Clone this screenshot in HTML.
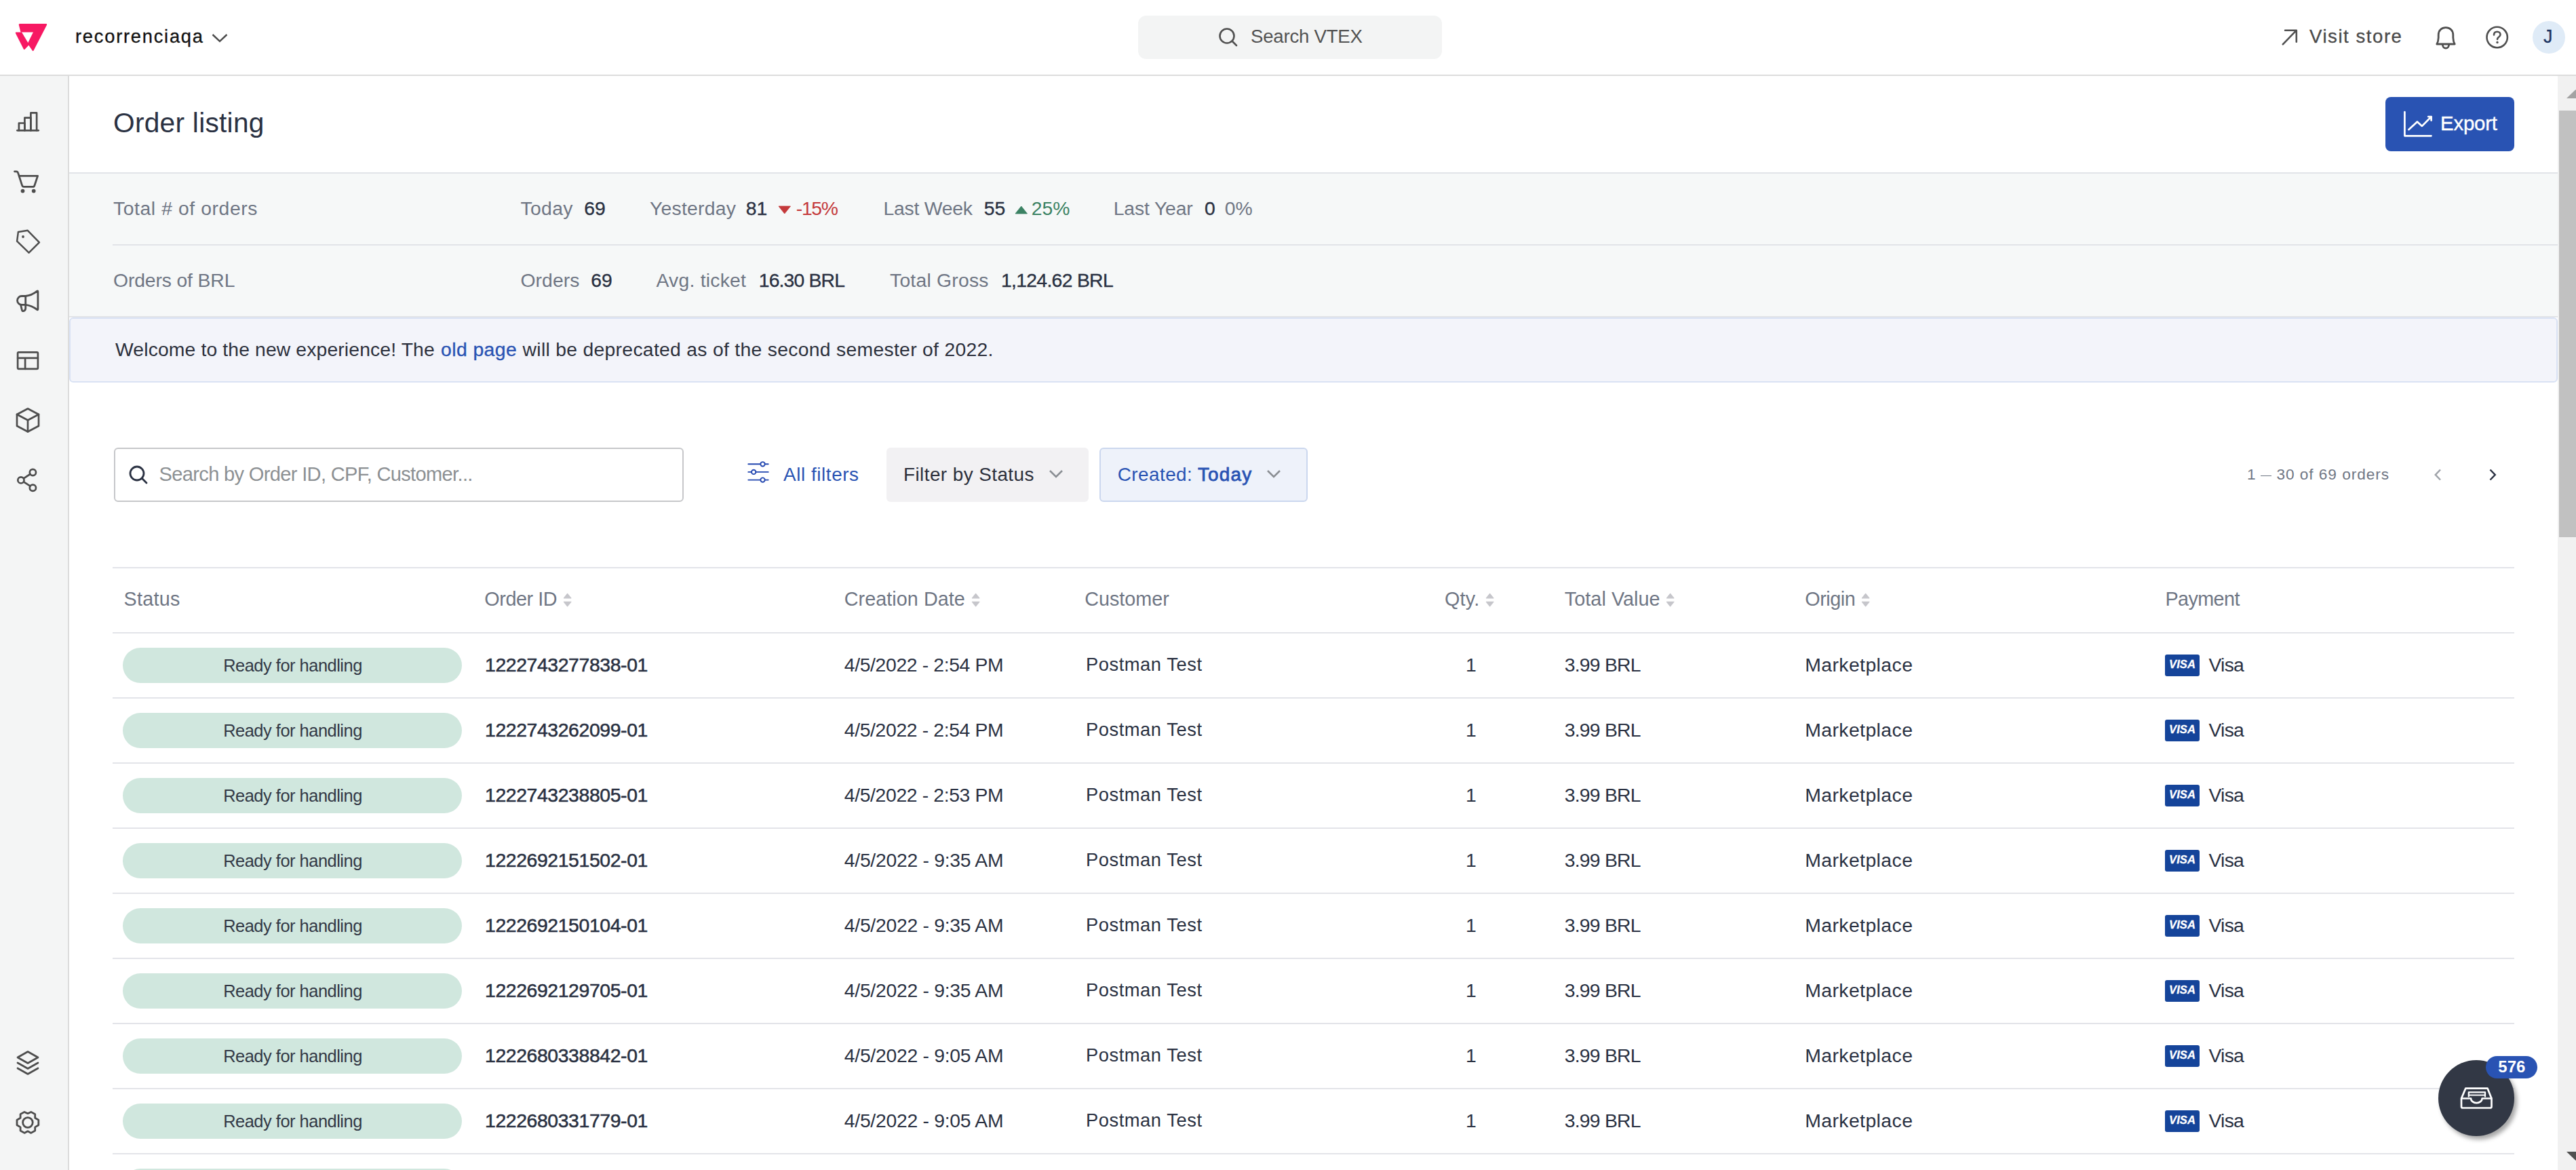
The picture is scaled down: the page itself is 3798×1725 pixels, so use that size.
<!DOCTYPE html><html><head><meta charset="utf-8"><style>
html,body{margin:0;padding:0;width:3798px;height:1725px;overflow:hidden;background:#fff}
.t{position:absolute;white-space:pre;font-family:"Liberation Sans",sans-serif;}
.b{position:absolute;}
</style></head><body>
<div class="b" style="left:0px;top:0px;width:3798px;height:110px;background:#fff"></div>
<div class="b" style="left:0px;top:110px;width:3798px;height:2px;background:#dcdcdc"></div>
<svg class="b" style="left:0;top:0" width="100" height="110" viewBox="0 0 100 110">
<path d="M28.8,36.2 H68.1 L48.6,74 L42.4,65 L35.8,72 L23.9,48.5 H31.4 L41.4,65.2 L50.8,46.3 H31.3 Z" fill="#f71963" stroke="#f71963" stroke-width="2.2" stroke-linejoin="round"/>
</svg>
<div class="t" style="left:111.00px;top:40.06px;font-size:27.33px;line-height:27.33px;color:#111;letter-spacing:1.742px;-webkit-text-stroke:0.3px #111;">recorrenciaqa</div>
<svg class="b" style="left:308px;top:46px" width="32" height="20" viewBox="0 0 32 20"><path d="M5.5,5 L16,14.8 L26.5,5" fill="none" stroke="#4a4a4a" stroke-width="2.4"/></svg>
<div class="b" style="left:1678px;top:23px;width:448px;height:64px;background:#f3f4f4;border-radius:12px"></div>
<svg class="b" style="left:1794px;top:39px" width="34" height="32" viewBox="0 0 34 32"><circle cx="15" cy="14" r="10.5" fill="none" stroke="#505050" stroke-width="2.6"/><path d="M22.5,21.5 L29,28" stroke="#505050" stroke-width="2.6" stroke-linecap="round"/></svg>
<div class="t" style="left:1844.00px;top:39.62px;font-size:27.62px;line-height:27.62px;color:#525252;letter-spacing:-0.230px;">Search VTEX</div>
<svg class="b" style="left:3360px;top:38px" width="34" height="34" viewBox="0 0 34 34"><path d="M5.8,27.3 L25.6,6.9 M9.1,6.7 H25.8 V23.7" fill="none" stroke="#505050" stroke-width="2.6" stroke-linecap="round" stroke-linejoin="round"/></svg>
<div class="t" style="left:3405.00px;top:39.62px;font-size:27.62px;line-height:27.62px;color:#4a4a4a;letter-spacing:1.526px;-webkit-text-stroke:0.3px #4a4a4a;">Visit store</div>
<svg class="b" style="left:3586px;top:36px" width="40" height="40" viewBox="0 0 40 40"><path d="M6.8,29 H33.2 Q31,25.5 30.8,19.5 V15.5 C30.8,8.8 26,4.7 20,4.7 C14,4.7 9.2,8.8 9.2,15.5 V19.5 Q9,25.5 6.8,29 Z" fill="none" stroke="#505050" stroke-width="2.8" stroke-linejoin="round"/><path d="M15.3,29.6 A4.7,5.6 0 0 0 24.7,29.6" fill="none" stroke="#505050" stroke-width="2.8"/></svg>
<svg class="b" style="left:3660px;top:35px" width="44" height="40" viewBox="0 0 44 40"><circle cx="21.7" cy="20" r="15.2" fill="none" stroke="#505050" stroke-width="2.6"/><path d="M17,16.5 C17,13.5 19,11.8 21.8,11.8 C24.6,11.8 26.5,13.6 26.5,16 C26.5,19.5 22,19.5 22,23" fill="none" stroke="#505050" stroke-width="2.6" stroke-linecap="round"/><circle cx="22" cy="27.5" r="1.7" fill="#505050"/></svg>
<div class="b" style="left:3734px;top:31px;width:48px;height:48px;background:#dfebf7;border-radius:50%"></div>
<div class="t" style="left:3750.00px;top:40.73px;font-size:26.89px;line-height:26.89px;color:#1d3563;-webkit-text-stroke:0.3px #1d3563;">J</div>
<div class="b" style="left:0px;top:112px;width:100px;height:1613px;background:#f4f5f5"></div>
<div class="b" style="left:100px;top:112px;width:2px;height:1613px;background:#dcdcdc"></div>
<svg class="b" style="left:20px;top:160px" width="44" height="40" viewBox="0 0 44 40" fill="none" stroke="#4d4d4d" stroke-width="2.7" stroke-linejoin="round" stroke-linecap="round"><path d="M5.4,32.3 H36.7"/><path d="M7.9,32.3 V21.5 H16.4 V32.3"/><path d="M16.4,32.3 V13.6 H25.4 V32.3"/><path d="M25.4,32.3 V6.4 H34.1 V32.3"/></svg>
<svg class="b" style="left:18px;top:246px" width="44" height="42" viewBox="0 0 44 42" fill="none" stroke="#4d4d4d" stroke-width="2.8" stroke-linejoin="round" stroke-linecap="round"><path d="M3.5,6.8 H6 Q8,6.8 8.6,8.9 L14.6,27.4 Q15.2,29.4 17.2,29.4 H30.4 Q32.3,29.4 32.9,27.5 L37.6,13.4 H10.2"/><circle cx="15.5" cy="35.6" r="1.5" fill="#4d4d4d"/><circle cx="31.7" cy="35.6" r="1.5" fill="#4d4d4d"/></svg>
<svg class="b" style="left:20px;top:334px" width="44" height="44" viewBox="0 0 44 44" fill="none" stroke="#4d4d4d" stroke-width="2.5" stroke-linejoin="round" stroke-linecap="round"><path d="M6.9,7.9 L20.8,5.8 L37.9,23.3 L22.6,38.7 L5.1,21.7 Z"/><circle cx="14" cy="15" r="1.9" fill="#4d4d4d" stroke="none"/></svg>
<svg class="b" style="left:20px;top:424px" width="44" height="40" viewBox="0 0 44 40" fill="none" stroke="#4d4d4d" stroke-width="2.8" stroke-linejoin="round" stroke-linecap="round"><path d="M35.9,6.2 Q35.9,4.3 34.4,5.3 Q27,11.3 17.7,12.5 H12 A6.45,6.45 0 0 0 12,25.4 H17.7 Q27,26.6 34.4,32.4 Q35.9,33.5 35.9,31.6 Z"/><path d="M17.7,12.5 V30.5 Q17.7,33.8 14.6,34.6 Q12.8,35 12.4,33.2 L10.6,25.6"/></svg>
<svg class="b" style="left:20px;top:513px" width="44" height="36" viewBox="0 0 44 36" fill="none" stroke="#4d4d4d" stroke-width="2.7" stroke-linejoin="round" stroke-linecap="round"><rect x="6.1" y="6.3" width="29.8" height="24.5" rx="1.5"/><path d="M6.1,14.9 H35.9 M17.1,14.9 V30.8"/></svg>
<svg class="b" style="left:20px;top:598px" width="44" height="44" viewBox="0 0 44 44" fill="none" stroke="#4d4d4d" stroke-width="2.7" stroke-linejoin="round" stroke-linecap="round"><path d="M21,4.5 L37,13 V30 L21,38.5 L5,30 V13 Z"/><path d="M5,13 L21,21.5 L37,13 M21,21.5 V38.5"/></svg>
<svg class="b" style="left:20px;top:686px" width="44" height="44" viewBox="0 0 44 44" fill="none" stroke="#4d4d4d" stroke-width="2.7" stroke-linejoin="round" stroke-linecap="round"><circle cx="10.9" cy="21.9" r="4.6"/><circle cx="28.4" cy="10.5" r="4.6"/><circle cx="28.4" cy="33.2" r="4.6"/><path d="M14.8,19.4 L24.5,13 M14.8,24.4 L24.5,30.7"/></svg>
<svg class="b" style="left:20px;top:1544px" width="44" height="46" viewBox="0 0 44 46" fill="none" stroke="#4d4d4d" stroke-width="2.7" stroke-linejoin="round" stroke-linecap="round"><path d="M21,6.5 L36,15 L21,23.5 L6,15 Z"/><path d="M6,23 L21,31.5 L36,23"/><path d="M6,31 L21,39.5 L36,31"/></svg>
<svg class="b" style="left:18px;top:1632px" width="46" height="46" viewBox="0 0 46 46" fill="none" stroke="#4d4d4d" stroke-width="2.8" stroke-linejoin="round" stroke-linecap="round"><circle cx="22.9" cy="23" r="7.3"/><path d="M22.9,9.7 L18,7.4 L12.1,10.7 L12.1,16.3 L7,19.2 L7,26.8 L12.1,29.9 L12.1,35 L18,38.4 L22.9,35.8 L27.8,38.4 L33.7,35 L33.7,29.9 L38.8,26.8 L38.8,19.2 L33.7,16.3 L33.7,10.7 L27.8,7.4 Z"/></svg>
<div class="b" style="left:102px;top:112px;width:3669px;height:142px;background:#fff"></div>
<div class="t" style="left:167.00px;top:161.04px;font-size:40.70px;line-height:40.70px;color:#2a3142;letter-spacing:0.258px;">Order listing</div>
<div class="b" style="left:3517px;top:143px;width:190px;height:80px;background:#2953b3;border-radius:8px"></div>
<svg class="b" style="left:3540px;top:160px" width="50" height="46" viewBox="0 0 50 46" fill="none" stroke="#fff" stroke-width="2.7" stroke-linecap="round" stroke-linejoin="round"><path d="M5.4,5 V40.3 H44.5"/><path d="M11.5,31 L23.9,19.4 L31,25.9 L44.4,12.3"/><path d="M40.2,12 H44.6 V17.6" /></svg>
<div class="t" style="left:3598.00px;top:166.84px;font-size:29.36px;line-height:29.36px;color:#fff;letter-spacing:-0.170px;-webkit-text-stroke:0.4px #fff;">Export</div>
<div class="b" style="left:102px;top:254px;width:3669px;height:2px;background:#e2e4e8"></div>
<div class="b" style="left:102px;top:256px;width:3669px;height:210px;background:#f6f8f8"></div>
<div class="b" style="left:166px;top:360px;width:3605px;height:2px;background:#e2e4e8"></div>
<div class="t" style="left:167.00px;top:293.00px;font-size:28.34px;line-height:28.34px;color:#6f7684;letter-spacing:0.580px;">Total # of orders</div>
<div class="t" style="left:767.50px;top:293.00px;font-size:28.34px;line-height:28.34px;color:#6f7684;letter-spacing:0.345px;">Today</div>
<div class="t" style="left:861.24px;top:293.00px;font-size:28.34px;line-height:28.34px;color:#2a3142;-webkit-text-stroke:0.35px #2a3142;">69</div>
<div class="t" style="left:958.00px;top:293.00px;font-size:28.34px;line-height:28.34px;color:#6f7684;letter-spacing:0.247px;">Yesterday</div>
<div class="t" style="left:1099.87px;top:293.00px;font-size:28.34px;line-height:28.34px;color:#2a3142;-webkit-text-stroke:0.35px #2a3142;">81</div>
<svg class="b" style="left:1146px;top:302px" width="22" height="15"><path d="M2,2 H19.5 L10.75,13 Z" fill="#c4393b" stroke="#c4393b" stroke-width="0.8" stroke-linejoin="round"/></svg>
<div class="t" style="left:1173.75px;top:293.00px;font-size:28.34px;line-height:28.34px;color:#c4393b;letter-spacing:-1.301px;">-15%</div>
<div class="t" style="left:1302.50px;top:293.00px;font-size:28.34px;line-height:28.34px;color:#6f7684;letter-spacing:-0.242px;">Last Week</div>
<div class="t" style="left:1450.74px;top:293.00px;font-size:28.34px;line-height:28.34px;color:#2a3142;-webkit-text-stroke:0.35px #2a3142;">55</div>
<svg class="b" style="left:1495px;top:302px" width="22" height="15"><path d="M2,13 H19.5 L10.75,2 Z" fill="#3b8263" stroke="#3b8263" stroke-width="0.8" stroke-linejoin="round"/></svg>
<div class="t" style="left:1520.77px;top:293.00px;font-size:28.34px;line-height:28.34px;color:#3b8263;">25%</div>
<div class="t" style="left:1641.75px;top:293.00px;font-size:28.34px;line-height:28.34px;color:#6f7684;letter-spacing:-0.149px;">Last Year</div>
<div class="t" style="left:1776.00px;top:293.00px;font-size:28.34px;line-height:28.34px;color:#2a3142;-webkit-text-stroke:0.35px #2a3142;">0</div>
<div class="t" style="left:1805.77px;top:293.00px;font-size:28.34px;line-height:28.34px;color:#6f7684;">0%</div>
<div class="t" style="left:167.00px;top:399.00px;font-size:28.34px;line-height:28.34px;color:#6f7684;letter-spacing:-0.137px;">Orders of BRL</div>
<div class="t" style="left:767.50px;top:399.00px;font-size:28.34px;line-height:28.34px;color:#6f7684;letter-spacing:0.077px;">Orders</div>
<div class="t" style="left:871.24px;top:399.00px;font-size:28.34px;line-height:28.34px;color:#2a3142;-webkit-text-stroke:0.35px #2a3142;">69</div>
<div class="t" style="left:967.50px;top:399.00px;font-size:28.34px;line-height:28.34px;color:#6f7684;letter-spacing:0.226px;">Avg. ticket</div>
<div class="t" style="left:1118.75px;top:399.00px;font-size:28.34px;line-height:28.34px;color:#2a3142;letter-spacing:-0.837px;-webkit-text-stroke:0.35px #2a3142;">16.30 BRL</div>
<div class="t" style="left:1312.00px;top:399.00px;font-size:28.34px;line-height:28.34px;color:#6f7684;letter-spacing:0.217px;">Total Gross</div>
<div class="t" style="left:1476.00px;top:399.00px;font-size:28.34px;line-height:28.34px;color:#2a3142;letter-spacing:-0.691px;-webkit-text-stroke:0.35px #2a3142;">1,124.62 BRL</div>
<div class="b" style="left:102px;top:466px;width:3669px;height:2px;background:#e2e4e8"></div>
<div class="b" style="left:102px;top:468px;width:3669px;height:96px;background:#f3f4fa;border:2px solid #d9e2f4;border-radius:6px;box-sizing:border-box"></div>
<div class="t" style="left:170.00px;top:501.00px;font-size:28.34px;line-height:28.34px;color:#2c303c;letter-spacing:0.125px;">Welcome to the new experience! The</div>
<div class="t" style="left:650.00px;top:501.00px;font-size:28.34px;line-height:28.34px;color:#2953b3;letter-spacing:0.435px;-webkit-text-stroke:0.35px #2953b3;">old page</div>
<div class="t" style="left:770.56px;top:501.00px;font-size:28.34px;line-height:28.34px;color:#2c303c;letter-spacing:0.292px;">will be deprecated as of the second semester of 2022.</div>
<div class="b" style="left:102px;top:564px;width:3669px;height:1161px;background:#fff"></div>
<div class="b" style="left:168px;top:660px;width:840px;height:80px;background:#fff;border:2px solid #c6c7ca;border-radius:6px;box-sizing:border-box"></div>
<svg class="b" style="left:187px;top:683px" width="34" height="34" viewBox="0 0 34 34" fill="none" stroke="#2a3142" stroke-width="2.8"><circle cx="15" cy="15" r="10"/><path d="M22.3,22.3 L29,29" stroke-linecap="round"/></svg>
<div class="t" style="left:234.60px;top:685.39px;font-size:29.07px;line-height:29.07px;color:#8c9093;letter-spacing:-0.668px;">Search by Order ID, CPF, Customer...</div>
<svg class="b" style="left:1098px;top:676px" width="40" height="40" viewBox="0 0 40 40" fill="none" stroke="#2347b0" stroke-width="1.9" stroke-linecap="round"><path d="M5.3,8.3 H23.2 M29.8,8.3 H34.7 M5.3,19.9 H9.9 M16.5,19.9 H34.7 M5.3,31.6 H23.2 M29.8,31.6 H34.7"/><circle cx="26.5" cy="8.3" r="3.2"/><circle cx="13.2" cy="19.9" r="3.2"/><circle cx="26.5" cy="31.6" r="3.2"/></svg>
<div class="t" style="left:1155.00px;top:685.57px;font-size:27.91px;line-height:27.91px;color:#2953b3;letter-spacing:0.557px;">All filters</div>
<div class="b" style="left:1307px;top:660px;width:298px;height:80px;background:#f2f1f3;border-radius:6px"></div>
<div class="t" style="left:1332.00px;top:685.57px;font-size:27.91px;line-height:27.91px;color:#2c303c;letter-spacing:0.419px;">Filter by Status</div>
<svg class="b" style="left:1544px;top:689px" width="26" height="20"><path d="M4,5 L13,14 L22,5" fill="none" stroke="#8a8e93" stroke-width="2.6"/></svg>
<div class="b" style="left:1621px;top:660px;width:307px;height:80px;background:#eef2fa;border:2px solid #cbd7ee;border-radius:6px;box-sizing:border-box"></div>
<div class="t" style="left:1647.80px;top:685.57px;font-size:27.91px;line-height:27.91px;color:#2953b3;letter-spacing:0.425px;">Created:</div>
<div class="t" style="left:1765.90px;top:685.57px;font-size:27.91px;line-height:27.91px;color:#2953b3;letter-spacing:1.211px;-webkit-text-stroke:0.8px #2953b3;">Today</div>
<svg class="b" style="left:1865px;top:689px" width="26" height="20"><path d="M4,5 L13,14 L22,5" fill="none" stroke="#8a8e93" stroke-width="2.6"/></svg>
<div class="t" style="left:3313.00px;top:688.40px;font-size:22.67px;line-height:22.67px;color:#6f7684;">1</div>
<div class="b" style="left:3332.5px;top:700.5px;width:16.5px;height:1.5px;background:#6f7684"></div>
<div class="t" style="left:3356.40px;top:688.40px;font-size:22.67px;line-height:22.67px;color:#6f7684;letter-spacing:0.955px;">30 of 69 orders</div>
<svg class="b" style="left:3584px;top:688px" width="22" height="24"><path d="M14,4.5 L6.8,12 L14,19.5" fill="none" stroke="#9ea2a8" stroke-width="2.5"/></svg>
<svg class="b" style="left:3664px;top:688px" width="22" height="24"><path d="M7.5,4.5 L14.7,12 L7.5,19.5" fill="none" stroke="#2a3142" stroke-width="2.5"/></svg>
<div class="b" style="left:166px;top:836px;width:3541px;height:2px;background:#e3e4e9"></div>
<div class="t" style="left:182.50px;top:868.83px;font-size:28.78px;line-height:28.78px;color:#6f7684;letter-spacing:0.242px;">Status</div>
<div class="t" style="left:714.30px;top:868.83px;font-size:28.78px;line-height:28.78px;color:#6f7684;letter-spacing:-0.434px;">Order ID</div>
<svg class="b" style="left:829.3px;top:874px" width="16" height="22"><path d="M2.4,7.8 L7.6,1.3 L12.9,7.8 Z M2.4,13.3 L7.6,19.9 L12.9,13.3 Z" fill="#c6c6cb" stroke="#c6c6cb" stroke-width="1.2" stroke-linejoin="round"/></svg>
<div class="t" style="left:1244.80px;top:868.83px;font-size:28.78px;line-height:28.78px;color:#6f7684;letter-spacing:0.044px;">Creation Date</div>
<svg class="b" style="left:1430.8px;top:874px" width="16" height="22"><path d="M2.4,7.8 L7.6,1.3 L12.9,7.8 Z M2.4,13.3 L7.6,19.9 L12.9,13.3 Z" fill="#c6c6cb" stroke="#c6c6cb" stroke-width="1.2" stroke-linejoin="round"/></svg>
<div class="t" style="left:1599.20px;top:868.83px;font-size:28.78px;line-height:28.78px;color:#6f7684;letter-spacing:-0.008px;">Customer</div>
<div class="t" style="left:2130.00px;top:868.83px;font-size:28.78px;line-height:28.78px;color:#6f7684;letter-spacing:0.193px;">Qty.</div>
<svg class="b" style="left:2188.7px;top:874px" width="16" height="22"><path d="M2.4,7.8 L7.6,1.3 L12.9,7.8 Z M2.4,13.3 L7.6,19.9 L12.9,13.3 Z" fill="#c6c6cb" stroke="#c6c6cb" stroke-width="1.2" stroke-linejoin="round"/></svg>
<div class="t" style="left:2306.80px;top:868.83px;font-size:28.78px;line-height:28.78px;color:#6f7684;letter-spacing:0.063px;">Total Value</div>
<svg class="b" style="left:2454.8px;top:874px" width="16" height="22"><path d="M2.4,7.8 L7.6,1.3 L12.9,7.8 Z M2.4,13.3 L7.6,19.9 L12.9,13.3 Z" fill="#c6c6cb" stroke="#c6c6cb" stroke-width="1.2" stroke-linejoin="round"/></svg>
<div class="t" style="left:2661.20px;top:868.83px;font-size:28.78px;line-height:28.78px;color:#6f7684;letter-spacing:-0.417px;">Origin</div>
<svg class="b" style="left:2743px;top:874px" width="16" height="22"><path d="M2.4,7.8 L7.6,1.3 L12.9,7.8 Z M2.4,13.3 L7.6,19.9 L12.9,13.3 Z" fill="#c6c6cb" stroke="#c6c6cb" stroke-width="1.2" stroke-linejoin="round"/></svg>
<div class="t" style="left:3192.40px;top:868.83px;font-size:28.78px;line-height:28.78px;color:#6f7684;letter-spacing:-0.577px;">Payment</div>
<div class="b" style="left:166px;top:932px;width:3541px;height:2px;background:#e3e4e9"></div>
<div class="b" style="left:181px;top:955px;width:500px;height:52px;background:#d0e7de;border-radius:26px"></div>
<div class="t" style="left:329.20px;top:968.76px;font-size:25.44px;line-height:25.44px;color:#323845;letter-spacing:-0.496px;">Ready for handling</div>
<div class="t" style="left:715.00px;top:965.50px;font-size:28.34px;line-height:28.34px;color:#2a3142;letter-spacing:-0.365px;-webkit-text-stroke:0.55px #2a3142;">1222743277838-01</div>
<div class="t" style="left:1244.80px;top:965.50px;font-size:28.34px;line-height:28.34px;color:#2a3142;letter-spacing:-0.362px;">4/5/2022 - 2:54 PM</div>
<div class="t" style="left:1600.90px;top:966.36px;font-size:27.33px;line-height:27.33px;color:#2a3142;letter-spacing:0.550px;">Postman Test</div>
<div class="t" style="left:2161.00px;top:965.50px;font-size:28.34px;line-height:28.34px;color:#2a3142;">1</div>
<div class="t" style="left:2306.80px;top:965.50px;font-size:28.34px;line-height:28.34px;color:#2a3142;letter-spacing:-0.780px;">3.99 BRL</div>
<div class="t" style="left:2661.20px;top:965.50px;font-size:28.34px;line-height:28.34px;color:#2a3142;letter-spacing:0.442px;">Marketplace</div>
<div class="b" style="left:3192px;top:965px;width:51px;height:32px;background:#15449a;border-radius:3px"></div>
<div class="t" style="left:3198.00px;top:972.47px;font-size:16.57px;line-height:16.57px;color:#fff;letter-spacing:0.109px;font-weight:700;-webkit-text-stroke:0.3px #fff;font-style:italic;">VISA</div>
<div class="t" style="left:3256.40px;top:965.50px;font-size:28.34px;line-height:28.34px;color:#2a3142;letter-spacing:-0.715px;">Visa</div>
<div class="b" style="left:166px;top:1028px;width:3541px;height:2px;background:#e3e4e9"></div>
<div class="b" style="left:181px;top:1051px;width:500px;height:52px;background:#d0e7de;border-radius:26px"></div>
<div class="t" style="left:329.20px;top:1064.76px;font-size:25.44px;line-height:25.44px;color:#323845;letter-spacing:-0.496px;">Ready for handling</div>
<div class="t" style="left:715.00px;top:1061.50px;font-size:28.34px;line-height:28.34px;color:#2a3142;letter-spacing:-0.365px;-webkit-text-stroke:0.55px #2a3142;">1222743262099-01</div>
<div class="t" style="left:1244.80px;top:1061.50px;font-size:28.34px;line-height:28.34px;color:#2a3142;letter-spacing:-0.362px;">4/5/2022 - 2:54 PM</div>
<div class="t" style="left:1600.90px;top:1062.36px;font-size:27.33px;line-height:27.33px;color:#2a3142;letter-spacing:0.550px;">Postman Test</div>
<div class="t" style="left:2161.00px;top:1061.50px;font-size:28.34px;line-height:28.34px;color:#2a3142;">1</div>
<div class="t" style="left:2306.80px;top:1061.50px;font-size:28.34px;line-height:28.34px;color:#2a3142;letter-spacing:-0.780px;">3.99 BRL</div>
<div class="t" style="left:2661.20px;top:1061.50px;font-size:28.34px;line-height:28.34px;color:#2a3142;letter-spacing:0.442px;">Marketplace</div>
<div class="b" style="left:3192px;top:1061px;width:51px;height:32px;background:#15449a;border-radius:3px"></div>
<div class="t" style="left:3198.00px;top:1068.47px;font-size:16.57px;line-height:16.57px;color:#fff;letter-spacing:0.109px;font-weight:700;-webkit-text-stroke:0.3px #fff;font-style:italic;">VISA</div>
<div class="t" style="left:3256.40px;top:1061.50px;font-size:28.34px;line-height:28.34px;color:#2a3142;letter-spacing:-0.715px;">Visa</div>
<div class="b" style="left:166px;top:1124px;width:3541px;height:2px;background:#e3e4e9"></div>
<div class="b" style="left:181px;top:1147px;width:500px;height:52px;background:#d0e7de;border-radius:26px"></div>
<div class="t" style="left:329.20px;top:1160.76px;font-size:25.44px;line-height:25.44px;color:#323845;letter-spacing:-0.496px;">Ready for handling</div>
<div class="t" style="left:715.00px;top:1157.50px;font-size:28.34px;line-height:28.34px;color:#2a3142;letter-spacing:-0.365px;-webkit-text-stroke:0.55px #2a3142;">1222743238805-01</div>
<div class="t" style="left:1244.80px;top:1157.50px;font-size:28.34px;line-height:28.34px;color:#2a3142;letter-spacing:-0.362px;">4/5/2022 - 2:53 PM</div>
<div class="t" style="left:1600.90px;top:1158.36px;font-size:27.33px;line-height:27.33px;color:#2a3142;letter-spacing:0.550px;">Postman Test</div>
<div class="t" style="left:2161.00px;top:1157.50px;font-size:28.34px;line-height:28.34px;color:#2a3142;">1</div>
<div class="t" style="left:2306.80px;top:1157.50px;font-size:28.34px;line-height:28.34px;color:#2a3142;letter-spacing:-0.780px;">3.99 BRL</div>
<div class="t" style="left:2661.20px;top:1157.50px;font-size:28.34px;line-height:28.34px;color:#2a3142;letter-spacing:0.442px;">Marketplace</div>
<div class="b" style="left:3192px;top:1157px;width:51px;height:32px;background:#15449a;border-radius:3px"></div>
<div class="t" style="left:3198.00px;top:1164.47px;font-size:16.57px;line-height:16.57px;color:#fff;letter-spacing:0.109px;font-weight:700;-webkit-text-stroke:0.3px #fff;font-style:italic;">VISA</div>
<div class="t" style="left:3256.40px;top:1157.50px;font-size:28.34px;line-height:28.34px;color:#2a3142;letter-spacing:-0.715px;">Visa</div>
<div class="b" style="left:166px;top:1220px;width:3541px;height:2px;background:#e3e4e9"></div>
<div class="b" style="left:181px;top:1243px;width:500px;height:52px;background:#d0e7de;border-radius:26px"></div>
<div class="t" style="left:329.20px;top:1256.76px;font-size:25.44px;line-height:25.44px;color:#323845;letter-spacing:-0.496px;">Ready for handling</div>
<div class="t" style="left:715.00px;top:1253.50px;font-size:28.34px;line-height:28.34px;color:#2a3142;letter-spacing:-0.365px;-webkit-text-stroke:0.55px #2a3142;">1222692151502-01</div>
<div class="t" style="left:1244.80px;top:1253.50px;font-size:28.34px;line-height:28.34px;color:#2a3142;letter-spacing:-0.271px;">4/5/2022 - 9:35 AM</div>
<div class="t" style="left:1600.90px;top:1254.36px;font-size:27.33px;line-height:27.33px;color:#2a3142;letter-spacing:0.550px;">Postman Test</div>
<div class="t" style="left:2161.00px;top:1253.50px;font-size:28.34px;line-height:28.34px;color:#2a3142;">1</div>
<div class="t" style="left:2306.80px;top:1253.50px;font-size:28.34px;line-height:28.34px;color:#2a3142;letter-spacing:-0.780px;">3.99 BRL</div>
<div class="t" style="left:2661.20px;top:1253.50px;font-size:28.34px;line-height:28.34px;color:#2a3142;letter-spacing:0.442px;">Marketplace</div>
<div class="b" style="left:3192px;top:1253px;width:51px;height:32px;background:#15449a;border-radius:3px"></div>
<div class="t" style="left:3198.00px;top:1260.47px;font-size:16.57px;line-height:16.57px;color:#fff;letter-spacing:0.109px;font-weight:700;-webkit-text-stroke:0.3px #fff;font-style:italic;">VISA</div>
<div class="t" style="left:3256.40px;top:1253.50px;font-size:28.34px;line-height:28.34px;color:#2a3142;letter-spacing:-0.715px;">Visa</div>
<div class="b" style="left:166px;top:1316px;width:3541px;height:2px;background:#e3e4e9"></div>
<div class="b" style="left:181px;top:1339px;width:500px;height:52px;background:#d0e7de;border-radius:26px"></div>
<div class="t" style="left:329.20px;top:1352.76px;font-size:25.44px;line-height:25.44px;color:#323845;letter-spacing:-0.496px;">Ready for handling</div>
<div class="t" style="left:715.00px;top:1349.50px;font-size:28.34px;line-height:28.34px;color:#2a3142;letter-spacing:-0.365px;-webkit-text-stroke:0.55px #2a3142;">1222692150104-01</div>
<div class="t" style="left:1244.80px;top:1349.50px;font-size:28.34px;line-height:28.34px;color:#2a3142;letter-spacing:-0.271px;">4/5/2022 - 9:35 AM</div>
<div class="t" style="left:1600.90px;top:1350.36px;font-size:27.33px;line-height:27.33px;color:#2a3142;letter-spacing:0.550px;">Postman Test</div>
<div class="t" style="left:2161.00px;top:1349.50px;font-size:28.34px;line-height:28.34px;color:#2a3142;">1</div>
<div class="t" style="left:2306.80px;top:1349.50px;font-size:28.34px;line-height:28.34px;color:#2a3142;letter-spacing:-0.780px;">3.99 BRL</div>
<div class="t" style="left:2661.20px;top:1349.50px;font-size:28.34px;line-height:28.34px;color:#2a3142;letter-spacing:0.442px;">Marketplace</div>
<div class="b" style="left:3192px;top:1349px;width:51px;height:32px;background:#15449a;border-radius:3px"></div>
<div class="t" style="left:3198.00px;top:1356.47px;font-size:16.57px;line-height:16.57px;color:#fff;letter-spacing:0.109px;font-weight:700;-webkit-text-stroke:0.3px #fff;font-style:italic;">VISA</div>
<div class="t" style="left:3256.40px;top:1349.50px;font-size:28.34px;line-height:28.34px;color:#2a3142;letter-spacing:-0.715px;">Visa</div>
<div class="b" style="left:166px;top:1412px;width:3541px;height:2px;background:#e3e4e9"></div>
<div class="b" style="left:181px;top:1435px;width:500px;height:52px;background:#d0e7de;border-radius:26px"></div>
<div class="t" style="left:329.20px;top:1448.76px;font-size:25.44px;line-height:25.44px;color:#323845;letter-spacing:-0.496px;">Ready for handling</div>
<div class="t" style="left:715.00px;top:1445.50px;font-size:28.34px;line-height:28.34px;color:#2a3142;letter-spacing:-0.365px;-webkit-text-stroke:0.55px #2a3142;">1222692129705-01</div>
<div class="t" style="left:1244.80px;top:1445.50px;font-size:28.34px;line-height:28.34px;color:#2a3142;letter-spacing:-0.271px;">4/5/2022 - 9:35 AM</div>
<div class="t" style="left:1600.90px;top:1446.36px;font-size:27.33px;line-height:27.33px;color:#2a3142;letter-spacing:0.550px;">Postman Test</div>
<div class="t" style="left:2161.00px;top:1445.50px;font-size:28.34px;line-height:28.34px;color:#2a3142;">1</div>
<div class="t" style="left:2306.80px;top:1445.50px;font-size:28.34px;line-height:28.34px;color:#2a3142;letter-spacing:-0.780px;">3.99 BRL</div>
<div class="t" style="left:2661.20px;top:1445.50px;font-size:28.34px;line-height:28.34px;color:#2a3142;letter-spacing:0.442px;">Marketplace</div>
<div class="b" style="left:3192px;top:1445px;width:51px;height:32px;background:#15449a;border-radius:3px"></div>
<div class="t" style="left:3198.00px;top:1452.47px;font-size:16.57px;line-height:16.57px;color:#fff;letter-spacing:0.109px;font-weight:700;-webkit-text-stroke:0.3px #fff;font-style:italic;">VISA</div>
<div class="t" style="left:3256.40px;top:1445.50px;font-size:28.34px;line-height:28.34px;color:#2a3142;letter-spacing:-0.715px;">Visa</div>
<div class="b" style="left:166px;top:1508px;width:3541px;height:2px;background:#e3e4e9"></div>
<div class="b" style="left:181px;top:1531px;width:500px;height:52px;background:#d0e7de;border-radius:26px"></div>
<div class="t" style="left:329.20px;top:1544.76px;font-size:25.44px;line-height:25.44px;color:#323845;letter-spacing:-0.496px;">Ready for handling</div>
<div class="t" style="left:715.00px;top:1541.50px;font-size:28.34px;line-height:28.34px;color:#2a3142;letter-spacing:-0.365px;-webkit-text-stroke:0.55px #2a3142;">1222680338842-01</div>
<div class="t" style="left:1244.80px;top:1541.50px;font-size:28.34px;line-height:28.34px;color:#2a3142;letter-spacing:-0.271px;">4/5/2022 - 9:05 AM</div>
<div class="t" style="left:1600.90px;top:1542.36px;font-size:27.33px;line-height:27.33px;color:#2a3142;letter-spacing:0.550px;">Postman Test</div>
<div class="t" style="left:2161.00px;top:1541.50px;font-size:28.34px;line-height:28.34px;color:#2a3142;">1</div>
<div class="t" style="left:2306.80px;top:1541.50px;font-size:28.34px;line-height:28.34px;color:#2a3142;letter-spacing:-0.780px;">3.99 BRL</div>
<div class="t" style="left:2661.20px;top:1541.50px;font-size:28.34px;line-height:28.34px;color:#2a3142;letter-spacing:0.442px;">Marketplace</div>
<div class="b" style="left:3192px;top:1541px;width:51px;height:32px;background:#15449a;border-radius:3px"></div>
<div class="t" style="left:3198.00px;top:1548.47px;font-size:16.57px;line-height:16.57px;color:#fff;letter-spacing:0.109px;font-weight:700;-webkit-text-stroke:0.3px #fff;font-style:italic;">VISA</div>
<div class="t" style="left:3256.40px;top:1541.50px;font-size:28.34px;line-height:28.34px;color:#2a3142;letter-spacing:-0.715px;">Visa</div>
<div class="b" style="left:166px;top:1604px;width:3541px;height:2px;background:#e3e4e9"></div>
<div class="b" style="left:181px;top:1627px;width:500px;height:52px;background:#d0e7de;border-radius:26px"></div>
<div class="t" style="left:329.20px;top:1640.76px;font-size:25.44px;line-height:25.44px;color:#323845;letter-spacing:-0.496px;">Ready for handling</div>
<div class="t" style="left:715.00px;top:1637.50px;font-size:28.34px;line-height:28.34px;color:#2a3142;letter-spacing:-0.365px;-webkit-text-stroke:0.55px #2a3142;">1222680331779-01</div>
<div class="t" style="left:1244.80px;top:1637.50px;font-size:28.34px;line-height:28.34px;color:#2a3142;letter-spacing:-0.271px;">4/5/2022 - 9:05 AM</div>
<div class="t" style="left:1600.90px;top:1638.36px;font-size:27.33px;line-height:27.33px;color:#2a3142;letter-spacing:0.550px;">Postman Test</div>
<div class="t" style="left:2161.00px;top:1637.50px;font-size:28.34px;line-height:28.34px;color:#2a3142;">1</div>
<div class="t" style="left:2306.80px;top:1637.50px;font-size:28.34px;line-height:28.34px;color:#2a3142;letter-spacing:-0.780px;">3.99 BRL</div>
<div class="t" style="left:2661.20px;top:1637.50px;font-size:28.34px;line-height:28.34px;color:#2a3142;letter-spacing:0.442px;">Marketplace</div>
<div class="b" style="left:3192px;top:1637px;width:51px;height:32px;background:#15449a;border-radius:3px"></div>
<div class="t" style="left:3198.00px;top:1644.47px;font-size:16.57px;line-height:16.57px;color:#fff;letter-spacing:0.109px;font-weight:700;-webkit-text-stroke:0.3px #fff;font-style:italic;">VISA</div>
<div class="t" style="left:3256.40px;top:1637.50px;font-size:28.34px;line-height:28.34px;color:#2a3142;letter-spacing:-0.715px;">Visa</div>
<div class="b" style="left:166px;top:1700px;width:3541px;height:2px;background:#e3e4e9"></div>
<div class="b" style="left:181px;top:1723px;width:500px;height:52px;background:#d0e7de;border-radius:26px"></div>
<div class="t" style="left:329.20px;top:1736.76px;font-size:25.44px;line-height:25.44px;color:#323845;letter-spacing:-0.496px;">Ready for handling</div>
<div class="t" style="left:715.00px;top:1733.50px;font-size:28.34px;line-height:28.34px;color:#2a3142;letter-spacing:-0.365px;-webkit-text-stroke:0.55px #2a3142;">1222680320001-01</div>
<div class="t" style="left:1244.80px;top:1733.50px;font-size:28.34px;line-height:28.34px;color:#2a3142;letter-spacing:-0.271px;">4/5/2022 - 9:05 AM</div>
<div class="t" style="left:1600.90px;top:1734.36px;font-size:27.33px;line-height:27.33px;color:#2a3142;letter-spacing:0.550px;">Postman Test</div>
<div class="t" style="left:2161.00px;top:1733.50px;font-size:28.34px;line-height:28.34px;color:#2a3142;">1</div>
<div class="t" style="left:2306.80px;top:1733.50px;font-size:28.34px;line-height:28.34px;color:#2a3142;letter-spacing:-0.780px;">3.99 BRL</div>
<div class="t" style="left:2661.20px;top:1733.50px;font-size:28.34px;line-height:28.34px;color:#2a3142;letter-spacing:0.442px;">Marketplace</div>
<div class="b" style="left:3192px;top:1733px;width:51px;height:32px;background:#15449a;border-radius:3px"></div>
<div class="t" style="left:3198.00px;top:1740.47px;font-size:16.57px;line-height:16.57px;color:#fff;letter-spacing:0.109px;font-weight:700;-webkit-text-stroke:0.3px #fff;font-style:italic;">VISA</div>
<div class="t" style="left:3256.40px;top:1733.50px;font-size:28.34px;line-height:28.34px;color:#2a3142;letter-spacing:-0.715px;">Visa</div>
<div class="b" style="left:3595px;top:1563px;width:112px;height:112px;background:#323845;border-radius:50%;box-shadow:4px 5px 6px rgba(0,0,0,.35)"></div>
<svg class="b" style="left:3622px;top:1598px" width="58" height="42" viewBox="0 0 58 42" fill="none" stroke="#fff" stroke-width="2.7" stroke-linejoin="round"><path d="M7,21.5 V33.5 Q7,35.5 9,35.5 H49.5 Q51.5,35.5 51.5,33.5 V21.5 H37.6 A8.3,6.6 0 0 1 21,21.5 Z"/><path d="M7,21.5 L13.3,6.6 H45.5 L51.5,21.5"/><path d="M17.8,19.5 V12.4 H42 V19.5" stroke-width="2.3"/><path d="M17.8,16.6 H42" stroke-width="2"/></svg>
<div class="b" style="left:3665px;top:1557px;width:76px;height:33px;background:#2953b3;border-radius:17px"></div>
<div class="t" style="left:3683.35px;top:1561.19px;font-size:23.98px;line-height:23.98px;color:#fff;font-weight:700;">576</div>
<div class="b" style="left:3771px;top:112px;width:27px;height:1613px;background:#f1f1f1"></div>
<div class="b" style="left:3773px;top:163px;width:25px;height:629px;background:#c1c1c1"></div>
<svg class="b" style="left:3771px;top:112px" width="27" height="50"><path d="M13,33 L26.5,20 L40,33 Z" fill="#a3a3a3"/></svg>
<svg class="b" style="left:3771px;top:1690px" width="27" height="35"><path d="M13,8 L26.5,21 L40,8 Z" fill="#505050"/></svg>
</body></html>
